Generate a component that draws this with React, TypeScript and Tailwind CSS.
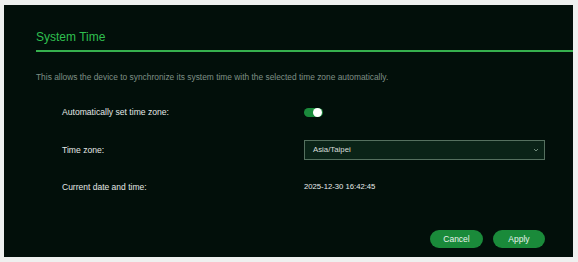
import React from "react";

export default function App() {
  return (
    <div
      className="w-[578px] h-[262px] bg-[#eef0ef] pt-[5px] pl-[4px] overflow-hidden"
      style={{ fontFamily: '"Liberation Sans", Arial, sans-serif' }}
    >
      <div className="w-[569px] h-[252px] bg-[#020f0a] flex flex-col pl-[32px]">
        <div className="pt-[25px] text-[12px] leading-[14px] text-[#2fbf4f]">System Time</div>
        <div className="mt-[6px] h-[2px] bg-[#36b04e]" />
        <div className="mt-[20px] text-[8.4px] leading-[10px] text-[#7f8f86]">
          This allows the device to synchronize its system time with the selected time zone automatically.
        </div>

        <div className="mt-[20px] flex items-center h-[20px] pl-[26px]">
          <div className="w-[242px] text-[8.6px] text-[#e4e8e6]">Automatically set time zone:</div>
          <div className="relative w-[19px] h-[9px] rounded-full bg-[#1b8a3c]">
            <div className="absolute right-[1px] top-[0px] w-[9px] h-[9px] rounded-full bg-white" />
          </div>
        </div>

        <div className="mt-[18px] flex items-center h-[20px] pl-[26px]">
          <div className="w-[242px] text-[8.6px] text-[#e4e8e6]">Time zone:</div>
          <div className="w-[241px] h-[20px] border border-[#55705f] bg-[#0a2317] flex items-center justify-between pl-[8px] pr-[5px]">
            <span className="text-[7.8px] text-[#d8dedb]">Asia/Taipei</span>
            <svg width="6" height="4" viewBox="0 0 6 4">
              <path d="M1 1 L3 3 L5 1" stroke="#6f8a7a" strokeWidth="1" fill="none" />
            </svg>
          </div>
        </div>

        <div className="mt-[17px] flex items-center h-[20px] pl-[26px]">
          <div className="w-[242px] text-[8.5px] text-[#e4e8e6]">Current date and time:</div>
          <div className="text-[7.7px] text-[#e8ecea]">2025-12-30 16:42:45</div>
        </div>

        <div className="mt-[33px] flex justify-end gap-[10px] pr-[28px]">
          <button className="w-[53px] h-[18px] rounded-full bg-[#1a8a3a] text-[8.5px] text-[#e8f2ec]">Cancel</button>
          <button className="w-[52px] h-[18px] rounded-full bg-[#1a8a3a] text-[8.5px] text-[#e8f2ec]">Apply</button>
        </div>
      </div>
    </div>
  );
}
